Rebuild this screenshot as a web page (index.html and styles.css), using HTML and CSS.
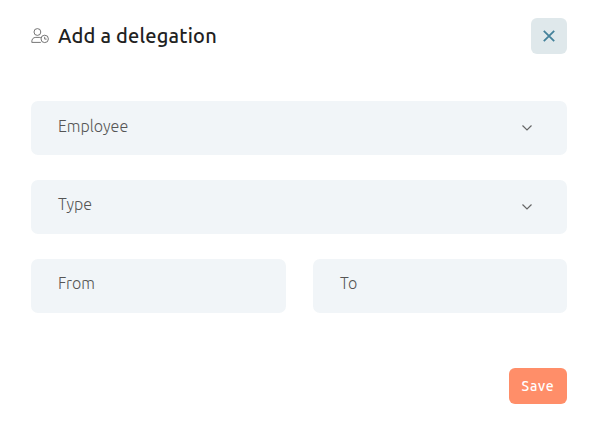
FILE: index.html
```html
<!DOCTYPE html>
<html lang="en">

<head>
    <meta charset="UTF-8">
    <meta name="viewport" content="width=device-width, initial-scale=1.0">
    <title>Add a delegation</title>
    <link rel="stylesheet" href="styles.css">
</head>

<body>
    <div class="modal">
        <div class="modal-header">
            <svg class="title-icon" width="18" height="16" viewBox="0 0 18 16" fill="none">
                <circle cx="6.4" cy="4" r="3.4" />
                <path d="M9.8 14.4H.8c-.2-3.4 1.4-5 4-5h3.4c.8 0 1.4.1 1.9.4" />
                <circle cx="13.7" cy="10.9" r="3.7" />
                <path d="M13.7 8.8v2.3h1.9" />
            </svg>
            <h1>Add a delegation</h1>
            <button type="button" class="close-btn" aria-label="Close">
                <svg width="12" height="12" viewBox="0 0 12 12" fill="none">
                    <path d="M.8.8l10.400 10.400M11.200.8L.8 11.200" />
                </svg>
            </button>
        </div>

        <form class="fields">
            <div class="field employee">
                <span class="label">Employee</span>
                <svg class="arrow" width="10" height="6" viewBox="0 0 10 6" fill="none">
                    <path d="M.5.5L5 5 9.5.5" />
                </svg>
            </div>
            <div class="field">
                <span class="label">Type</span>
                <svg class="arrow" width="10" height="6" viewBox="0 0 10 6" fill="none">
                    <path d="M.5.5L5 5 9.5.5" />
                </svg>
            </div>
            <div class="field-row">
                <div class="field"><span class="label">From</span></div>
                <div class="field"><span class="label">To</span></div>
            </div>
        </form>

        <div class="modal-footer">
            <button type="button" class="save-btn">Save</button>
        </div>
    </div>
</body>

</html>
```

FILE: styles.css
```css
* {
    margin: 0;
    padding: 0;
    box-sizing: border-box;
}

body {
    font-family: Ubuntu, "Noto Sans", sans-serif;
    background-color: #fff;
    color: #212121;
}

.modal {
    padding: 18px 32px 19px 31px;
}

.modal-header {
    display: flex;
    align-items: center;
    height: 36px;
}

.title-icon {
    margin-right: 9px;
    stroke: #666;
    stroke-width: 0.9;
}

h1 {
    flex: 1;
    font-size: 20px;
    font-weight: 500;
    line-height: 35px;
    height: 36px;
    letter-spacing: 0.2px;
    white-space: nowrap;
}

.close-btn {
    display: flex;
    align-items: center;
    justify-content: center;
    width: 36px;
    height: 36px;
    border: none;
    border-radius: 6px;
    background-color: #dfe8eb;
    cursor: pointer;
}

.close-btn path {
    stroke: #44819a;
    stroke-width: 1.8;
}

.fields {
    display: flex;
    flex-direction: column;
    gap: 25px;
    margin-top: 47px;
}

.field-row {
    display: grid;
    grid-template-columns: 255px 254px;
    gap: 27px;
}

.field {
    display: flex;
    justify-content: space-between;
    align-items: center;
    height: 54px;
    padding: 0 35px 6px 27px;
    border-radius: 7px;
    background-color: #f1f5f8;
}

.label {
    font-size: 16px;
    font-weight: 300;
    line-height: 24px;
    color: #555;
}

.employee .label {
    padding-top: 2px;
}

.arrow {
    margin-top: 6px;
}

.arrow path {
    stroke: #666;
    stroke-width: 1.2;
}

.modal-footer {
    display: flex;
    justify-content: flex-end;
    margin-top: 55px;
}

.save-btn {
    width: 58px;
    height: 36px;
    border: none;
    border-radius: 6px;
    background-color: #ff8e69;
    color: #fff;
    font-family: inherit;
    font-size: 14px;
    font-weight: 500;
    letter-spacing: 0.8px;
    cursor: pointer;
}
```
